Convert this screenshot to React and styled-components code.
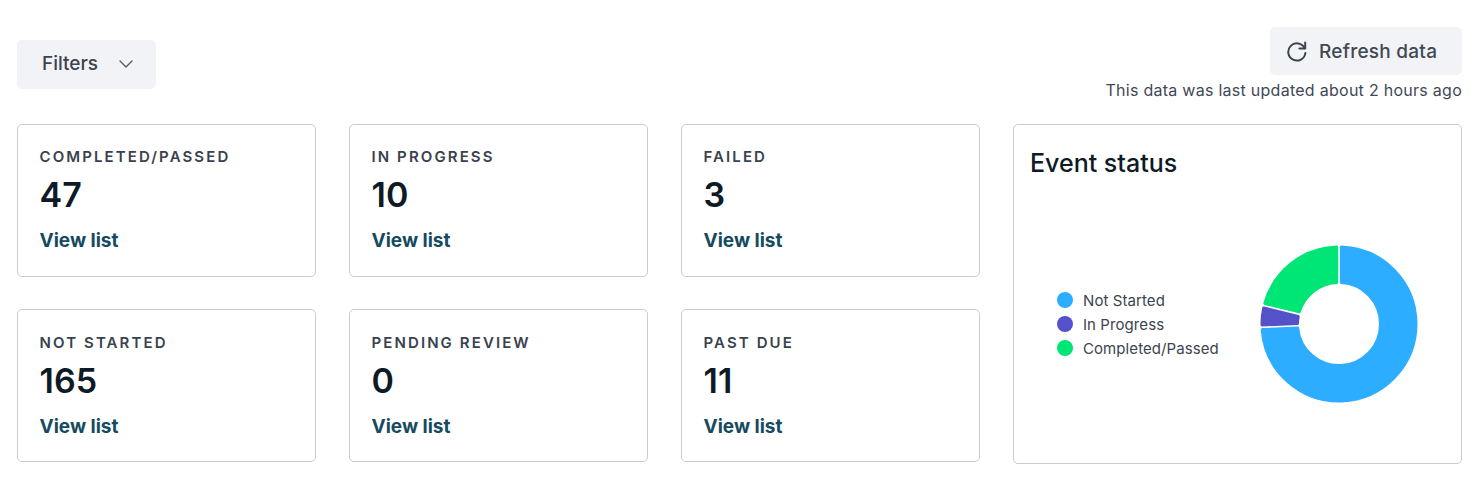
import React from 'react';
import styled, { createGlobalStyle } from 'styled-components';
import { ChevronDown } from 'lucide-react';

const GlobalStyle = createGlobalStyle`
    html, body {
        margin : 0;
        padding : 0;
        background : #ffffff;
        font-family : Inter, "Liberation Sans", sans-serif;
    }
`;

const Page = styled.div`
    width : 1482px;
    height : 503px;
    box-sizing : border-box;
    padding : 27px 20px 0 17px;
    overflow : hidden;
`;

const TopBar = styled.div`
    display : flex;
    justify-content : space-between;
    align-items : flex-start;
    height : 97px;
`;

const GreyButton = styled.button`
    display : flex;
    align-items : center;
    box-sizing : border-box;
    border : none;
    border-radius : 5px;
    background : #f1f3f7;
    color : #3c4450;
    font-family : inherit;
    font-weight : 500;
    padding : 0;
`;

const FilterButton = styled(GreyButton)`
    width : 139px;
    height : 49px;
    margin-top : 13px;
    padding : 0 0 2px 25px;
    font-size : 19px;
    gap : 16px;
`;

const RefreshColumn = styled.div`
    display : flex;
    flex-direction : column;
    align-items : flex-end;
`;

const RefreshButton = styled(GreyButton)`
    width : 192px;
    height : 48px;
    padding-left : 16px;
    font-size : 19px;
    font-weight : 500;
    letter-spacing : 0.25px;
    gap : 11px;
    color : #424852;
`;

const UpdatedText = styled.div`
    margin-top : 6px;
    font-size : 16px;
    line-height : 18px;
    letter-spacing : 0.27px;
    color : #3f4856;
`;

const Board = styled.div`
    display : grid;
    grid-template-columns : 299px 299px 299px 449px;
    grid-template-rows : 153px 153px;
    column-gap : 33px;
    row-gap : 32px;
`;

const Card = styled.div`
    box-sizing : border-box;
    border : 1px solid #c8cbd0;
    border-radius : 5px;
    padding : ${(p) => (p.$lower ? '24px' : '23px')} 22px 0;
`;

const CardLabel = styled.div`
    font-size : 15px;
    line-height : 18px;
    font-weight : 600;
    letter-spacing : 2.1px;
    color : #39424e;
    margin-left : -0.5px;
`;

const CardValue = styled.div`
    margin-top : 9px;
    margin-left : -0.5px;
    font-size : 34px;
    line-height : 40px;
    font-weight : 600;
    color : #0e1b26;
`;

const ViewLink = styled.a`
    display : block;
    margin-top : 15px;
    margin-left : -0.5px;
    font-size : 19px;
    line-height : 22px;
    font-weight : 700;
    color : #164a5f;
`;

const ChartCard = styled.div`
    grid-column : 4;
    grid-row : 1 / span 2;
    height : 340px;
    box-sizing : border-box;
    border : 1px solid #c8cbd0;
    border-radius : 5px;
    padding : 24px 16px 0;
`;

const ChartTitle = styled.div`
    font-size : 25px;
    line-height : 28px;
    font-weight : 500;
    color : #0e1b26;
`;

const ChartBody = styled.div`
    display : flex;
    align-items : center;
    margin-top : 65px;
    padding-left : 27px;
`;

const Legend = styled.div`
    display : flex;
    flex-direction : column;
    width : 200px;
`;

const LegendRow = styled.div`
    display : flex;
    align-items : center;
    height : 24px;
    gap : 10px;
    font-size : 15px;
    color : #3c4450;
    letter-spacing : 0.08px;
`;

const Dot = styled.span`
    width : 16px;
    height : 16px;
    border-radius : 50%;
    background : ${(p) => p.$color};
`;

const stats = [
    { label: 'COMPLETED/PASSED', value: 47 },
    { label: 'IN PROGRESS', value: 10 },
    { label: 'FAILED', value: 3 },
    { label: 'NOT STARTED', value: 165 },
    { label: 'PENDING REVIEW', value: 0 },
    { label: 'PAST DUE', value: 11 },
];

const slices = [
    { name: 'Not Started', value: 165, color: '#2dadff' },
    { name: 'In Progress', value: 10, color: '#5551c8' },
    { name: 'Completed/Passed', value: 47, color: '#00e676' },
];

// ring segment, angles in degrees clockwise from the top.
// edges are pulled in by `inset` so a same colour stroke can round the corners
function slicePath(cx, cy, outer, inner, from, to, inset) {
    const pt = (r, a) => {
        const rad = (a * Math.PI) / 180;
        return `${(cx + r * Math.sin(rad)).toFixed(2)} ${(cy - r * Math.cos(rad)).toFixed(2)}`;
    };
    const shift = (r) => (Math.asin(inset / r) * 180) / Math.PI;
    const large = to - from > 180 ? 1 : 0;
    return `M${pt(outer, from + shift(outer))} A${outer} ${outer} 0 ${large} 1 ${pt(outer, to - shift(outer))} L${pt(inner, to - shift(inner))} A${inner} ${inner} 0 ${large} 0 ${pt(inner, from + shift(inner))} Z`;
}

function Donut() {
    const total = slices.reduce((sum, s) => sum + s.value, 0);
    let angle = 0;
    return (
        <svg width="164" height="164" viewBox="0 0 164 164">
            {slices.map((s) => {
                const from = angle;
                angle += (s.value / total) * 360;
                return (
                    <path
                        key={s.name}
                        d={slicePath(82, 82, 77, 41.5, from, angle, 2.3)}
                        fill={s.color}
                        stroke={s.color}
                        strokeWidth="3"
                        strokeLinejoin="round"
                    />
                );
            })}
        </svg>
    );
}

function RefreshIcon() {
    return (
        <svg width="22" height="22" viewBox="0 0 22 22" fill="none" stroke="#3c4450" strokeWidth="2" strokeLinecap="round" strokeLinejoin="round">
            <path d="M18.6 8.2A8.6 8.6 0 1 0 19.4 13" />
            <path d="M19.2 2.6v5.8h-5.8" />
        </svg>
    );
}

export default function App() {
    return (
        <Page>
            <GlobalStyle />
            <TopBar>
                <FilterButton>
                    Filters
                    <ChevronDown size={24} strokeWidth={1.4} color="#565d68" />
                </FilterButton>
                <RefreshColumn>
                    <RefreshButton>
                        <RefreshIcon />
                        Refresh data
                    </RefreshButton>
                    <UpdatedText>This data was last updated about 2 hours ago</UpdatedText>
                </RefreshColumn>
            </TopBar>
            <Board>
                {stats.map((s, i) => (
                    <Card key={s.label} $lower={i > 2}>
                        <CardLabel>{s.label}</CardLabel>
                        <CardValue>{s.value}</CardValue>
                        <ViewLink>View list</ViewLink>
                    </Card>
                ))}
                <ChartCard>
                    <ChartTitle>Event status</ChartTitle>
                    <ChartBody>
                        <Legend>
                            {slices.map((s) => (
                                <LegendRow key={s.name}>
                                    <Dot $color={s.color} />
                                    {s.name}
                                </LegendRow>
                            ))}
                        </Legend>
                        <Donut />
                    </ChartBody>
                </ChartCard>
            </Board>
        </Page>
    );
}
